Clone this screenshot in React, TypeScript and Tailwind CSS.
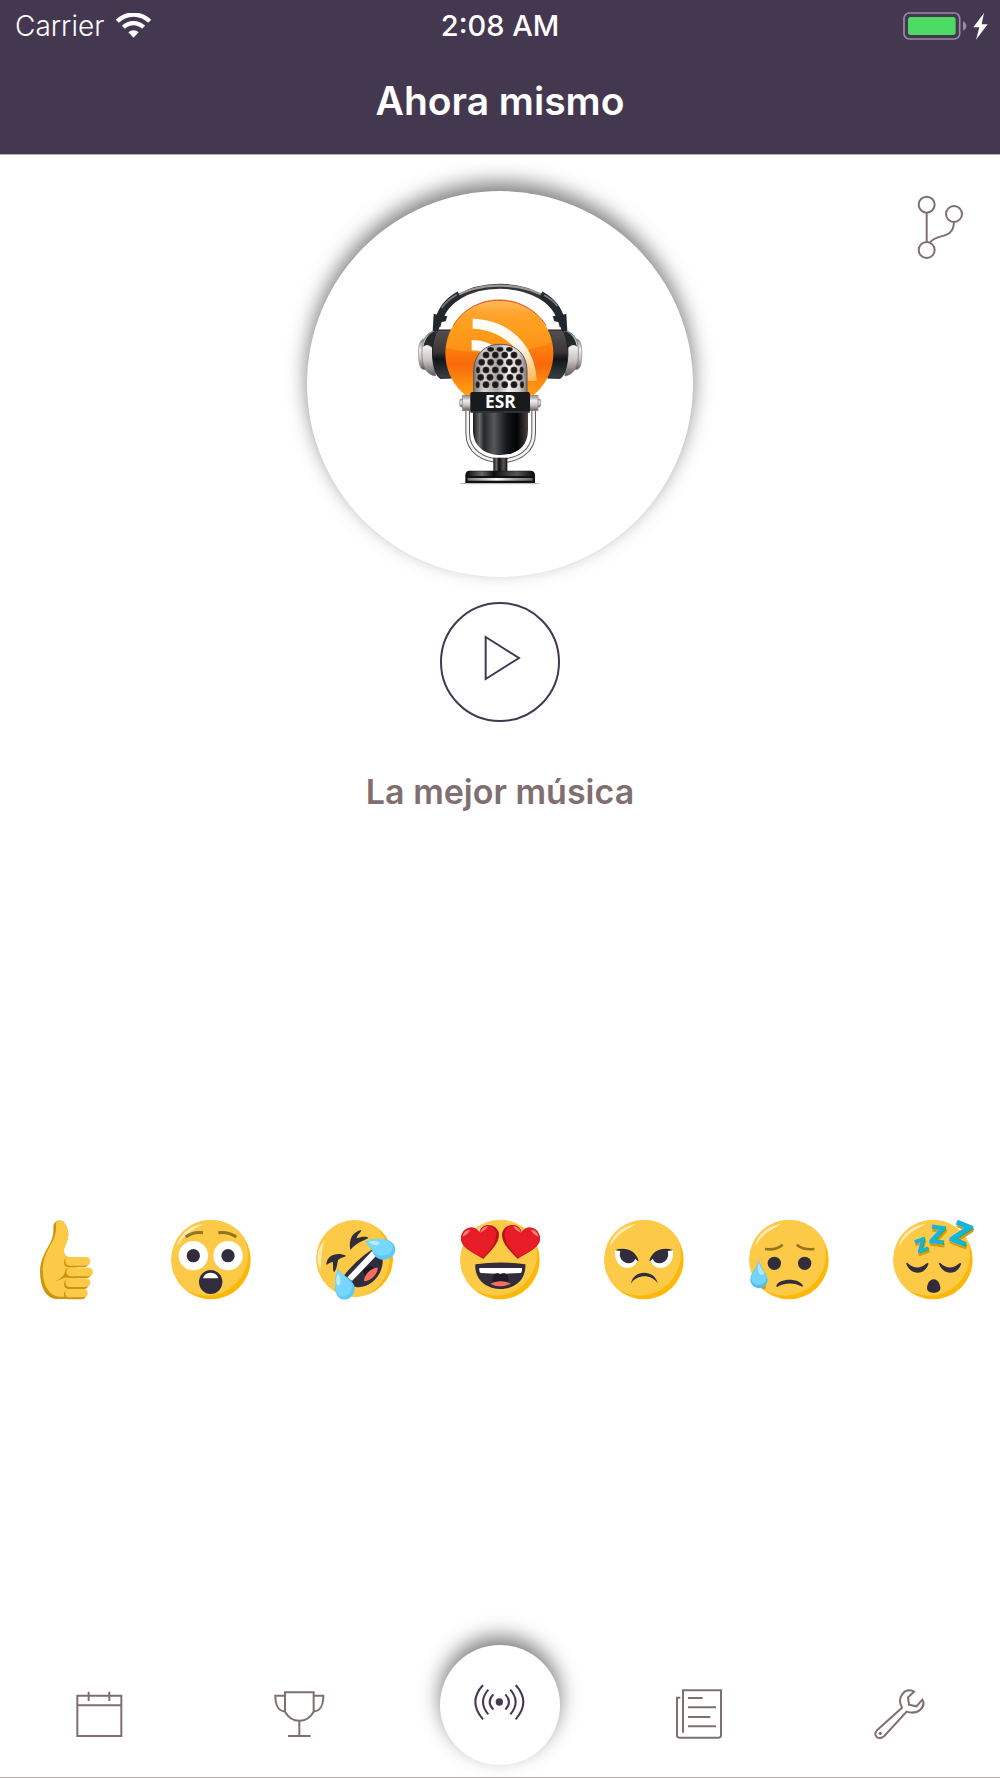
import type { ReactNode } from "react";

const GRILLE_ROWS = [
  { y: 236, xs: [272, 300, 328] },
  { y: 253, xs: [258, 286, 314, 342] },
  { y: 275, xs: [245, 272, 300, 328, 355] },
  { y: 298, xs: [234, 258, 286, 314, 342, 365] },
  { y: 320, xs: [242, 270, 300, 330, 358] },
  { y: 342, xs: [233, 258, 286, 314, 342, 366] },
];

function PodcastLogo() {
  return (
    <svg viewBox="0 -2 600 684" className="h-[228px] w-[200px]" role="img" aria-label="ESR">
      <defs>
        <linearGradient id="ball" x1="0" y1="0" x2="0" y2="1">
          <stop offset="0" stopColor="#ffa838" />
          <stop offset="0.3" stopColor="#ff9410" />
          <stop offset="0.6" stopColor="#f9690a" />
          <stop offset="0.85" stopColor="#ff9a14" />
          <stop offset="1" stopColor="#ffb52e" />
        </linearGradient>
        <linearGradient id="gloss" x1="0" y1="0" x2="0" y2="1">
          <stop offset="0" stopColor="#ffd9a0" stopOpacity="0.85" />
          <stop offset="0.4" stopColor="#ffae38" stopOpacity="0.3" />
          <stop offset="1" stopColor="#ffa41c" stopOpacity="0.55" />
        </linearGradient>
        <linearGradient id="rss" x1="0" y1="0" x2="0" y2="1">
          <stop offset="0" stopColor="#ffffff" />
          <stop offset="0.45" stopColor="#fff6e8" />
          <stop offset="1" stopColor="#ffb653" />
        </linearGradient>
        <linearGradient id="chrome" x1="0" y1="0" x2="1" y2="0">
          <stop offset="0" stopColor="#7d7778" />
          <stop offset="0.2" stopColor="#d8d3d3" />
          <stop offset="0.45" stopColor="#a8a2a3" />
          <stop offset="0.65" stopColor="#f4f2f2" />
          <stop offset="0.85" stopColor="#d2cccc" />
          <stop offset="1" stopColor="#807879" />
        </linearGradient>
        <linearGradient id="body" x1="0" y1="0" x2="1" y2="0">
          <stop offset="0" stopColor="#17191b" />
          <stop offset="0.12" stopColor="#6b6b6b" />
          <stop offset="0.2" stopColor="#252729" />
          <stop offset="0.38" stopColor="#565859" />
          <stop offset="0.6" stopColor="#14191c" />
          <stop offset="0.8" stopColor="#030303" />
          <stop offset="1" stopColor="#4a4344" />
        </linearGradient>
        <linearGradient id="cup" x1="0" y1="0" x2="0" y2="1">
          <stop offset="0" stopColor="#8c8888" />
          <stop offset="0.35" stopColor="#f0eeee" />
          <stop offset="0.65" stopColor="#c9c3c3" />
          <stop offset="1" stopColor="#5f5657" />
        </linearGradient>
        <linearGradient id="pad" x1="0" y1="0" x2="0" y2="1">
          <stop offset="0" stopColor="#55504f" />
          <stop offset="0.45" stopColor="#3b3636" />
          <stop offset="0.6" stopColor="#101418" />
          <stop offset="1" stopColor="#3a4145" />
        </linearGradient>
        <linearGradient id="foot" x1="0" y1="0" x2="1" y2="0">
          <stop offset="0" stopColor="#121212" />
          <stop offset="0.22" stopColor="#6a6767" />
          <stop offset="0.4" stopColor="#0e0e0e" />
          <stop offset="0.75" stopColor="#5a5555" />
          <stop offset="1" stopColor="#0d0d0d" />
        </linearGradient>
        <linearGradient id="rim" x1="0" y1="0" x2="1" y2="0">
          <stop offset="0" stopColor="#777" />
          <stop offset="0.45" stopColor="#fff" />
          <stop offset="0.7" stopColor="#aaa" />
          <stop offset="1" stopColor="#666" />
        </linearGradient>
        <clipPath id="ballClip">
          <circle cx="298" cy="248" r="160" />
        </clipPath>
      </defs>

      {/* Headband */}
      <path d="M114 168 C128 92 205 47 300 47 C395 47 472 92 486 168" fill="none" stroke="#343334" strokeWidth="15" />
      <path d="M150 86 C200 54 250 45 300 45 C350 45 400 54 450 86" fill="none" stroke="#9d9799" strokeWidth="7" />
      <path d="M116 150 C125 112 145 90 178 72" fill="none" stroke="#232a2f" strokeWidth="22" />
      <path d="M484 150 C475 112 455 90 422 72" fill="none" stroke="#232a2f" strokeWidth="22" />
      <path d="M125 112 C136 96 152 82 170 72" fill="none" stroke="#787c7e" strokeWidth="5" />
      <path d="M472 106 C462 93 448 82 432 73" fill="none" stroke="#787c7e" strokeWidth="5" />
      <path d="M101 130 L142 137 L137 152 L122 155 L115 182 L98 182Z" fill="#20282d" />
      <path d="M499 130 L458 137 L463 152 L478 155 L485 182 L502 182Z" fill="#20282d" />

      {/* Ear cups */}
      {["", "translate(601 0) scale(-1 1)"].map((transform) => (
        <g key={transform} transform={transform}>
          <path d="M78 205 C58 200 54 230 56 256 C56 285 63 300 76 296Z" fill="url(#cup)" stroke="#8d8585" strokeWidth="2" />
          <path d="M98 182 C70 192 64 222 66 258 C68 292 82 312 106 316 L118 186Z" fill="url(#cup)" stroke="#776d6d" strokeWidth="2" />
          <path d="M108 180 C88 186 75 203 70 228 C82 216 94 226 104 240Z" fill="#23292c" />
          <path d="M114 178 L158 178 V322 L120 323 C92 300 90 206 114 178Z" fill="url(#pad)" stroke="#1b2023" strokeWidth="3" />
        </g>
      ))}

      <circle cx="298" cy="248" r="162" fill="url(#ball)" />
      <g clipPath="url(#ballClip)">
        <path d="M130 230 C200 250 380 262 470 205 L470 60 L130 60Z" fill="url(#gloss)" />
      </g>
      <path d="M160 165 C190 113 244 88 300 89 C360 90 409 119 438 164" fill="none" stroke="#e8502a" strokeWidth="3" />
      <path d="M218 144 C330 146 408 228 410 331 L382 331 C380 246 310 176 218 174Z" fill="url(#rss)" />
      <path d="M215 208 C250 208 280 220 306 244 L285 268 C265 248 240 239 215 239Z" fill="#fff" />

      {/* Yoke */}
      <path d="M203 400 L203 486 C203 544 252 570 302 570 C352 570 401 544 401 486 L401 400" fill="none" stroke="#5f5859" strokeWidth="14" />
      <path d="M203 400 L203 486 C203 544 252 570 302 570 C352 570 401 544 401 486 L401 400" fill="none" stroke="#f3f1f1" strokeWidth="8" />
      <rect x="179" y="385" width="34" height="24" rx="5" fill="url(#cup)" stroke="#8f8788" strokeWidth="2" />
      <rect x="388" y="385" width="34" height="24" rx="5" fill="url(#cup)" stroke="#8f8788" strokeWidth="2" />
      <rect x="187" y="374" width="26" height="46" fill="url(#cup)" stroke="#8f8788" strokeWidth="2" />
      <rect x="388" y="374" width="26" height="46" fill="url(#cup)" stroke="#8f8788" strokeWidth="2" />

      {/* Microphone */}
      <path d="M221 368 L221 302 C221 250 255 221 301 221 C348 221 381 250 381 302 L381 368Z" fill="url(#chrome)" stroke="#5d5657" strokeWidth="3" />
      {GRILLE_ROWS.map((row) =>
        row.xs.map((x) => (
          <ellipse key={`${x}-${row.y}`} cx={x} cy={row.y} rx={x < 240 || x > 360 ? 6 : 10} ry={row.y < 250 ? 7 : 10} fill="#1c1819" stroke="#858081" strokeWidth="1" />
        )),
      )}
      <path d="M219 420 L384 420 L384 478 C384 530 346 553 302 553 C258 553 219 530 219 478Z" fill="url(#body)" />
      <rect x="211" y="364" width="179" height="62" rx="5" fill="#191a1c" />
      <path d="M211 424 H390" stroke="#4a494a" strokeWidth="3" />
      <text x="301" y="412" textAnchor="middle" className="font-['Open_Sans'] text-[52px] font-bold" fill="#fff">
        ESR
      </text>

      {/* Stand */}
      <path d="M280 561 H322 V604 H280Z" fill="url(#foot)" />
      <path d="M207 600 H394 Q405 602 405 614 V637 H196 V614 Q196 602 207 600Z" fill="#111" />
      <path d="M210 602 H392 L400 616 H202Z" fill="url(#foot)" />
      <rect x="203" y="622" width="195" height="8" fill="url(#rim)" />
      <path d="M181 639 H418" stroke="#b9aeae" strokeWidth="3" />
    </svg>
  );
}

function EmojiSvg({ children }: { children: ReactNode }) {
  return (
    <svg viewBox="0 0 240 240" className="size-20 overflow-visible" aria-hidden="true">
      {children}
    </svg>
  );
}

function Face({ id, children }: { id: string; children: ReactNode }) {
  return (
    <EmojiSvg>
      <clipPath id={id}>
        <circle cx="120" cy="119" r="119" />
      </clipPath>
      <g clipPath={`url(#${id})`}>
        <rect width="240" height="240" fill="#fdb706" />
        <circle cx="107" cy="103" r="124" fill="#fdca47" />
      </g>
      <path d="M18 76 C26 42 58 16 97 12 C72 26 50 38 34 56 C28 63 22 77 18 76Z" fill="#ffe9b5" />
      {children}
    </EmojiSvg>
  );
}

function ThumbEmoji() {
  const hand = "M79 22 C79 4 94 -3 108 4 C122 20 127 38 122 58 C116 78 108 84 112 100 C115 109 121 112 132 112 L150 112 L150 237 L86 237 C58 233 39 205 39 152 C40 115 60 88 71 66 C78 50 80 38 79 22Z";
  return (
    <EmojiSvg>
      <clipPath id="hand">
        <path d={hand} />
      </clipPath>
      <path d={hand} fill="#ca940d" />
      <g clipPath="url(#hand)">
        <path d={hand} fill="#fdca47" transform="translate(8 -7)" />
      </g>
      <path d="M84 184 C104 176 113 165 119 145 L124 172 C112 169 98 182 84 184Z" fill="#ca940d" />
      <g fill="#ca940d">
        <rect x="111" y="113" width="74" height="29" rx="14" />
        <rect x="113" y="145" width="80" height="29" rx="14" />
        <rect x="111" y="178" width="74" height="29" rx="14" />
        <rect x="111" y="209" width="67" height="29" rx="14" />
      </g>
      <g fill="#fdca47">
        <rect x="115" y="111" width="75" height="26" rx="13" />
        <rect x="118" y="143" width="80" height="26" rx="13" />
        <rect x="115" y="175" width="75" height="26" rx="13" />
        <rect x="115" y="207" width="67" height="25" rx="12" />
      </g>
    </EmojiSvg>
  );
}

function SurprisedEmoji() {
  return (
    <Face id="surprised">
      <g fill="none" stroke="#93741f" strokeWidth="9">
        <path d="M44 51 Q66 34 96 38" />
        <path d="M142 38 Q172 34 196 51" />
      </g>
      <circle cx="67" cy="107" r="44" fill="#fff" />
      <circle cx="171" cy="107" r="44" fill="#fff" />
      <circle cx="67" cy="107" r="20" fill="#312d3d" />
      <circle cx="171" cy="107" r="20" fill="#312d3d" />
      <ellipse cx="119" cy="186" rx="35" ry="36" fill="#312d3d" />
      <path d="M96 175 Q100 159 119 158 Q138 159 142 175Z" fill="#fff" />
    </Face>
  );
}

function RoflEmoji() {
  return (
    <EmojiSvg>
      <clipPath id="rofl">
        <circle cx="116" cy="116" r="115" />
      </clipPath>
      <g clipPath="url(#rofl)">
        <rect width="240" height="240" fill="#fdb706" />
        <circle cx="98" cy="114" r="123" fill="#fdca47" />
      </g>
      <path d="M28 60 C12 75 3 95 5 120 C7 135 10 145 13 147 C18 120 13 88 28 60Z" fill="#ffe9b5" />
      <path d="M103 90 C97 56 110 37 135 30 C138 35 124 42 122 55 C135 49 154 49 157 53 C154 59 124 63 103 90Z" fill="#312d3d" />
      <path d="M31 134 C32 105 63 95 90 107 C88 112 73 111 66 121 C63 134 62 151 54 156 C49 151 53 138 50 126 C43 125 37 133 31 134Z" fill="#312d3d" />
      <path d="M85 165 C102 142 145 100 174 86 C192 87 204 112 199 136 C190 184 142 213 107 197 C96 190 88 178 85 165Z" fill="#312d3d" />
      <path d="M94 172 L168 93 L183 105 L108 183Z" fill="#fff" />
      <path d="M140 152 Q160 130 174 145 L150 172Z" fill="#1d1a26" />
      <path d="M144 184 C143 165 168 141 185 143 C187 160 164 184 144 184Z" fill="#fc6f5f" />
      <path d="M148 65 C178 52 235 50 238 88 C236 122 190 130 174 104 C167 86 158 76 148 65Z" fill="#5dc9f4" />
      <path d="M148 65 C178 52 228 50 230 84 C226 110 188 112 175 98 C167 84 158 76 148 65Z" fill="#78d7ff" />
      <path d="M158 66 Q180 59 192 68 Q180 84 158 66Z" fill="#bdecff" />
      <path d="M66 147 C52 182 52 226 76 238 C105 244 122 216 114 195 C105 175 80 167 66 147Z" fill="#5dc9f4" />
      <path d="M66 147 C52 182 54 220 75 229 C98 232 110 212 107 193 C98 174 80 167 66 147Z" fill="#78d7ff" />
      <path d="M66 160 Q54 190 68 198 Q79 185 66 160Z" fill="#bdecff" />
    </EmojiSvg>
  );
}

function Heart() {
  return (
    <>
      <path d="M70 117 C42 98 2 84 3 54 C5 24 42 10 59 38 C62 8 108 6 117 40 C119 73 88 96 70 117Z" fill="#b81218" />
      <path d="M69 113 C42 98 2 84 3 54 C5 24 42 10 58 38 C62 10 102 8 109 40 C111 70 86 94 69 113Z" fill="#e81c27" />
      <path d="M8 50 Q10 31 30 29 Q26 42 8 50Z" fill="#f98078" />
      <path d="M60 38 Q66 20 84 18 Q78 30 60 38Z" fill="#f98078" />
    </>
  );
}

function HeartEyesEmoji() {
  return (
    <Face id="hearts">
      <Heart />
      <g transform="translate(243 0) scale(-1 1)">
        <Heart />
      </g>
      <path d="M46 133 Q120 122 196 133 C199 178 165 207 122 207 C78 207 43 178 46 133Z" fill="#312d3d" />
      <path d="M58 144 H186 Q187 157 182 159 Q120 163 62 159 Q57 157 58 144Z" fill="#fff" />
      <path d="M98 184 C96 160 112 155 121 164 C130 155 147 160 145 184Z" fill="#1d1a26" />
      <path d="M91 191 Q121 176 152 191 Q138 199 121 199 Q104 199 91 191Z" fill="#fc6f5f" />
    </Face>
  );
}

function AngryEmoji() {
  return (
    <Face id="angry">
      {["", "translate(240 0) scale(-1 1)"].map((transform) => (
        <g key={transform} transform={transform}>
          <path d="M33 90 C30 122 46 144 72 144 C86 143 97 134 101 121 C88 98 66 90 33 90Z" fill="#fff" />
          <path d="M33 90 C66 80 96 92 104 123 C102 124 98 121 94 116 C88 133 66 134 54 121 C47 112 46 102 49 94Z" fill="#312d3d" />
        </g>
      ))}
      <path d="M81 191 C88 148 152 148 161 190 C142 162 100 162 81 191Z" fill="#312d3d" />
    </Face>
  );
}

function SadEmoji() {
  return (
    <Face id="sad">
      <g fill="none" stroke="#93741f" strokeWidth="8">
        <path d="M48 87 Q80 92 101 74" />
        <path d="M143 74 Q164 91 196 87" />
      </g>
      <circle cx="76" cy="130" r="20" fill="#312d3d" />
      <circle cx="167" cy="130" r="20" fill="#312d3d" />
      <path d="M82 198 C88 174 152 172 162 198 C161 202 158 200 155 198 C135 188 108 188 88 199 C85 201 82 202 82 198Z" fill="#312d3d" />
      <path d="M36 205 L52 195 L48 208Z" fill="#d88d12" />
      <path d="M29 121 C24 145 3 160 4 180 C7 212 53 213 56 180 C55 160 35 145 29 121Z" fill="#50c0ea" />
      <path d="M29 121 C24 145 4 160 7 178 C11 201 48 201 53 175 C52 158 35 145 29 121Z" fill="#72d3fb" />
      <path d="M29 128 Q23 154 34 164 Q48 167 45 155 Q35 145 29 128Z" fill="#b3e8fc" />
    </Face>
  );
}

function SleepingEmoji() {
  const letters = [
    { x: 85, y: 75, size: "text-[52px]", turn: -20 },
    { x: 133, y: 44, size: "text-[70px]", turn: 8 },
    { x: 204, y: 40, size: "text-[86px]", turn: 22 },
  ];
  return (
    <Face id="sleeping">
      {letters.map((l) => (
        <g key={l.x} textAnchor="middle" className={`font-[Lato] font-black ${l.size}`} strokeWidth="5">
          <text transform={`translate(${l.x + 3} ${l.y + 8}) rotate(${l.turn})`} dy="0.36em" fill="#d99a05" stroke="#d99a05">Z</text>
          <text transform={`translate(${l.x} ${l.y}) rotate(${l.turn})`} dy="0.36em" fill="#13b5d8" stroke="#13b5d8">Z</text>
        </g>
      ))}
      <path d="M40 132 C38 127 44 128 47 132 C62 146 84 146 98 132 C103 127 108 128 106 133 C95 168 52 166 40 132Z" fill="#312d3d" />
      <path d="M138 132 C136 127 142 128 145 132 C160 146 182 146 196 132 C201 127 206 128 204 133 C193 168 150 166 138 132Z" fill="#312d3d" />
      <path d="M122 178 C136 179 142 194 142 206 C140 222 104 222 102 206 C102 194 108 179 122 178Z" fill="#312d3d" />
    </Face>
  );
}

const REACTIONS = [
  { label: "Me gusta", icon: <ThumbEmoji /> },
  { label: "Me sorprende", icon: <SurprisedEmoji /> },
  { label: "Me divierte", icon: <RoflEmoji /> },
  { label: "Me encanta", icon: <HeartEyesEmoji /> },
  { label: "Me enfada", icon: <AngryEmoji /> },
  { label: "Me entristece", icon: <SadEmoji /> },
  { label: "Me aburre", icon: <SleepingEmoji /> },
];

function TabIcon({ children }: { children: ReactNode }) {
  return (
    <svg viewBox="0 0 168 168" className="size-14" fill="none" stroke="currentColor" strokeWidth="6" aria-hidden="true">
      {children}
    </svg>
  );
}

function TabLink({ label, children }: { label: string; children: ReactNode }) {
  return (
    <a href="#" aria-label={label} className="flex justify-center pb-6 text-[#7f6f70]">
      <TabIcon>{children}</TabIcon>
    </a>
  );
}

function StatusBar() {
  return (
    <div className="grid h-[51px] grid-cols-3 items-center px-[15px]">
      <div className="flex items-center gap-3">
        <span className="text-[28px] leading-8 font-light">Carrier</span>
        <svg viewBox="0 0 105 75" className="h-[25px] w-[35px]" aria-hidden="true">
          <g fill="none" stroke="#fff">
            <path d="M4 25 C31 -2 74 -2 101 25" strokeWidth="13" />
            <path d="M22 43 C39 26 66 26 83 43" strokeWidth="13" />
          </g>
          <path d="M37 58 C46 50 59 50 68 58 L52.5 74Z" fill="#fff" />
        </svg>
      </div>
      <span className="text-center text-[29px] leading-8 font-medium">2:08 AM</span>
      <svg viewBox="0 0 258 84" className="-mr-1 h-7 w-[86px] justify-self-end" aria-hidden="true">
        <rect x="3" y="3" width="167" height="78" rx="16" fill="none" stroke="#968da0" strokeWidth="5" />
        <rect x="15" y="15" width="143" height="54" rx="8" fill="#4cd964" />
        <path d="M180 28 Q190 33 190 42 Q190 51 180 56Z" fill="#968da0" />
        <path d="M243 3 L211 46 H229 L219 83 L254 37 H236Z" fill="#fff" />
      </svg>
    </div>
  );
}

export default function App() {
  return (
    <div className="flex min-h-screen flex-col border-b border-[#b0abab] bg-white font-[Inter,sans-serif]">
      <header className="border-b border-[#b4afb9] bg-[#443750] text-white">
        <StatusBar />
        <div className="flex h-[103px] items-center justify-center pb-1">
          <h1 className="text-[39px] leading-12 font-semibold">Ahora mismo</h1>
        </div>
      </header>

      <main className="flex flex-1 flex-col items-center pt-9">
        <div className="grid w-full grid-cols-[1fr_auto_1fr] items-start">
          <div className="col-start-2 flex size-[386px] items-center justify-center rounded-full bg-white shadow-[0_-9px_20px_rgba(0,0,0,0.5)]">
            <PodcastLogo />
          </div>
          <button type="button" aria-label="Compartir" className="mr-7 justify-self-end text-[#7f6f70]">
            <svg viewBox="0 -4 180 216" className="h-[72px] w-[60px]" fill="none" stroke="currentColor" strokeWidth="6">
              <circle cx="44" cy="37" r="24" />
              <circle cx="126" cy="65" r="24" />
              <circle cx="44" cy="173" r="24" />
              <path d="M44 61 V149" />
              <path d="M126 89 C124 143 76 122 54 150" />
            </svg>
          </button>
        </div>

        <button type="button" aria-label="Reproducir" className="mt-[25px] size-[120px] rounded-full border-2 border-[#443750] text-[#443750]">
          <svg viewBox="0 0 348 348" className="size-full" fill="none" stroke="currentColor" strokeWidth="6">
            <path d="M131 99 L231 162 L131 225Z" />
          </svg>
        </button>

        <h2 className="mt-[50px] text-[34px] leading-10 font-semibold text-[#7f6f70]">La mejor música</h2>

        <div className="flex w-full flex-1 items-center justify-between px-[27px] pt-[62px]">
          {REACTIONS.map((reaction) => (
            <button key={reaction.label} type="button" aria-label={reaction.label}>
              {reaction.icon}
            </button>
          ))}
        </div>
      </main>

      <nav className="grid grid-cols-5 items-end pb-3">
        <TabLink label="Programación">
          <path d="M16 32 H148 V153 H16Z M16 61 H148 M50 20 V48 M112 20 V48" />
        </TabLink>
        <TabLink label="Concursos">
          <path d="M39 22 H125 V80 C115 98 99 107 82 107 C65 107 49 98 39 80Z" stroke="none" />
          <path d="M39 80 V22 H125 V80 C115 98 99 107 82 107 C65 107 49 98 39 80" />
          <path d="M39 32 H10 C10 60 20 79 39 79 M125 32 H154 C154 60 144 79 125 79" />
          <path d="M82 107 V153 M48 153 H116" />
        </TabLink>
        <a
          href="#"
          aria-label="Ahora mismo"
          aria-current="page"
          className="flex size-[120px] items-center justify-center justify-self-center rounded-full bg-white text-[#443750] shadow-[0_-9px_20px_rgba(0,0,0,0.5)]"
        >
          <TabIcon>
            <circle cx="82" cy="75" r="11" fill="currentColor" stroke="none" />
            <path d="M64 52 Q42 75 64 98 M49 38 Q17 75 49 112 M33 24 Q-13 75 33 127" />
            <path d="M100 52 Q122 75 100 98 M115 38 Q147 75 115 112 M131 24 Q177 75 131 127" />
          </TabIcon>
        </a>
        <TabLink label="Noticias">
          <path d="M33 143 V16 H147 V151 Q147 158 140 158 H22 Q15 158 15 151 V38 H25" />
          <path d="M48 39 H92 M48 67 H132 M48 96 H115 M48 124 H132" />
        </TabLink>
        <TabLink label="Ajustes">
          <path d="M126 20 L108 37 L111 59 L133 64 L151 44 C163 65 138 91 104 80 L37 153 C21 168 0 151 15 136 L90 68 C73 37 98 6 126 20Z" />
          <circle cx="25" cy="145" r="5" fill="currentColor" stroke="none" />
        </TabLink>
      </nav>
    </div>
  );
}
